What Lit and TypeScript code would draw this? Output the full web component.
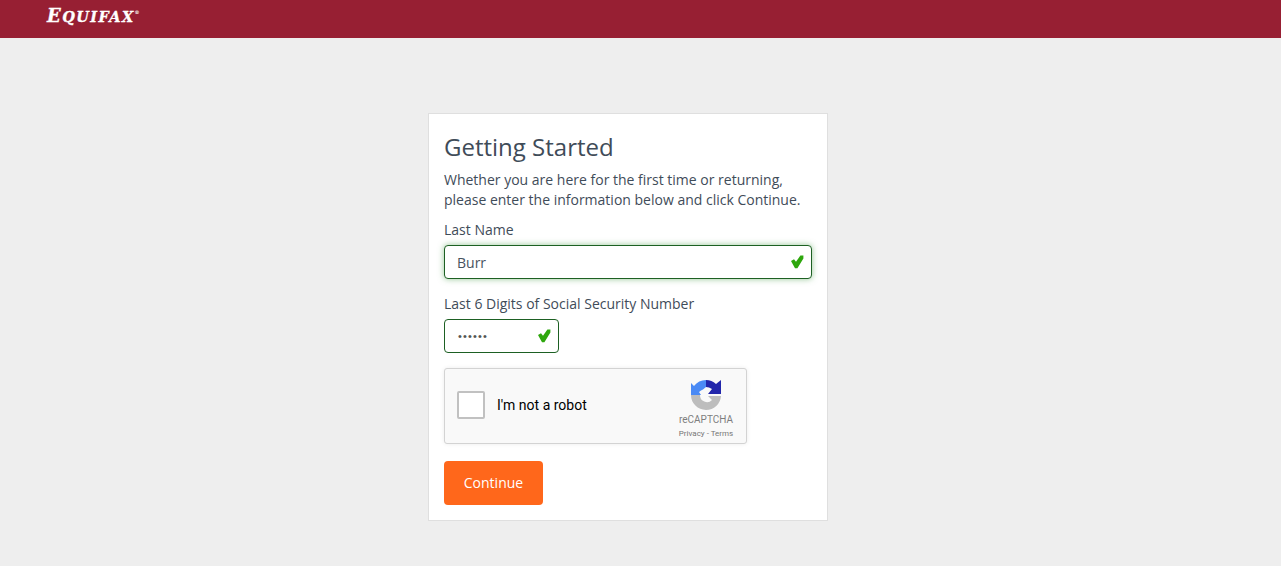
import { LitElement, html, css } from "lit";
import { customElement } from "lit/decorators.js";

const check = html`<svg class="check" width="14" height="14" viewBox="0 0 14 14"><path d="M1 6 L4 4.2 L6 6.8 L10.4 0.6 L13.4 0.6 L13.4 3.6 L7.4 13.2 L5 13.2 Z" fill="#2ea70d"/></svg>`;

@customElement("app-root")
export class AppRoot extends LitElement {
  static styles = css`
    :host { display: block; min-height: 566px; background: #eeeeee; font-family: "Open Sans", sans-serif; color: #3f4c59; }
    .bar { height: 38px; background: #971f33; display: flex; align-items: flex-start; padding-left: 47px; box-sizing: border-box; overflow: hidden; }
    .logo { font: italic 700 14.5px/1 "DejaVu Serif", serif; color: #fff; margin-top: 7px; white-space: nowrap; display: flex; align-items: baseline; letter-spacing: 1.4px; -webkit-text-stroke: 0.3px #fff; }
    .logo b { font-size: 18px; font-weight: 700; }
    .logo sup { font-size: 5px; letter-spacing: 0; -webkit-text-stroke: 0; align-self: flex-start; line-height: 1; margin-top: 3px; }
    .page { display: flex; justify-content: flex-start; padding: 75px 0 0 428px; }
    .card { width: 400px; height: 408px; box-sizing: border-box; background: #fff; border: 1px solid #dfdfdf; padding: 15px; display: flex; flex-direction: column; }
    h1 { margin: 0; font-size: 24px; line-height: 36px; font-weight: 400; color: #3f4c59; }
    p { margin: 5px 0 0; font-size: 14px; line-height: 20px; }
    label { display: block; font-size: 14px; line-height: 20px; }
    .l1 { margin-top: 10px; }
    .l2 { margin-top: 15px; }
    .input { margin-top: 5px; height: 34px; box-sizing: border-box; border: 1px solid #1d6023; border-radius: 4px; display: flex; align-items: center; justify-content: space-between; padding: 0 7px 0 12px; font-size: 14px; color: #48535e; background: #fff; }
    .focus { box-shadow: 0 0 6px rgba(60, 150, 60, 0.55); }
    .short { width: 115px; }
    .dots { font-size: 11px; letter-spacing: 1.15px; color: #555; font-family: "Liberation Sans", sans-serif; margin-left: 1px; }
    .check { display: block; }
    .cap { margin-top: 15px; width: 303px; height: 76px; box-sizing: border-box; background: #f9f9f9; border: 1px solid #d3d3d3; border-radius: 3px; box-shadow: 0 0 4px rgba(0, 0, 0, 0.08); display: flex; align-items: flex-start; font-family: Roboto, "Liberation Sans", sans-serif; }
    .box { width: 28px; height: 28px; box-sizing: border-box; margin: 22px 0 0 12px; border: 2px solid #c1c1c1; border-radius: 2px; background: #fff; }
    .txt { margin: 28px 0 0 12px; font-size: 14px; line-height: 17px; color: #000; flex: 1; }
    .brand { width: 70px; margin: 11px 5px 0 0; display: flex; flex-direction: column; align-items: center; color: #8a8a8a; }
    .brand svg { display: block; }
    .rc { font-size: 10px; line-height: 12px; margin-top: 4px; color: #555; opacity: .75; }
    .pt { font-size: 8px; line-height: 10px; margin-top: 3px; color: #555; opacity: .8; white-space: nowrap; }
    button { margin-top: 17px; width: 99px; height: 44px; border: 0; border-radius: 4px; background: #ff671b; color: #fff; font: 500 14px/44px "Open Sans", sans-serif; padding: 0; }
  `;

  render() {
    return html`
      <div class="bar"><div class="logo"><b>E</b>QUIFAX<sup>®</sup></div></div>
      <div class="page">
        <div class="card">
          <h1>Getting Started</h1>
          <p>Whether you are here for the first time or returning,<br />please enter the information below and click Continue.</p>
          <label class="l1">Last Name</label>
          <div class="input focus"><span>Burr</span>${check}</div>
          <label class="l2">Last 6 Digits of Social Security Number</label>
          <div class="input short"><span class="dots">••••••</span>${check}</div>
          <div class="cap">
            <div class="box"></div>
            <div class="txt">I'm not a robot</div>
            <div class="brand">
              <svg width="31" height="30" viewBox="0 0 31 30">
                <path d="M15 0 A15 15 0 0 0 3 6 L0 3 V15 H10 L8 12 Q10 10 12 9.5 L15 7 Z" fill="#4a8af5"/>
                <path d="M15 0 A15 15 0 0 1 25 4 L30 0 V14 H17 L21 9 Q18 7 15 7 Z" fill="#2226ab"/>
                <path d="M0 15 H9 A7 7 0 0 0 21 20 L17 16 H30 A15 15 0 0 1 15 30 A15 15 0 0 1 0 15 Z" fill="#bdbdbd"/>
              </svg>
              <div class="rc">reCAPTCHA</div>
              <div class="pt">Privacy - Terms</div>
            </div>
          </div>
          <button>Continue</button>
        </div>
      </div>
    `;
  }
}
